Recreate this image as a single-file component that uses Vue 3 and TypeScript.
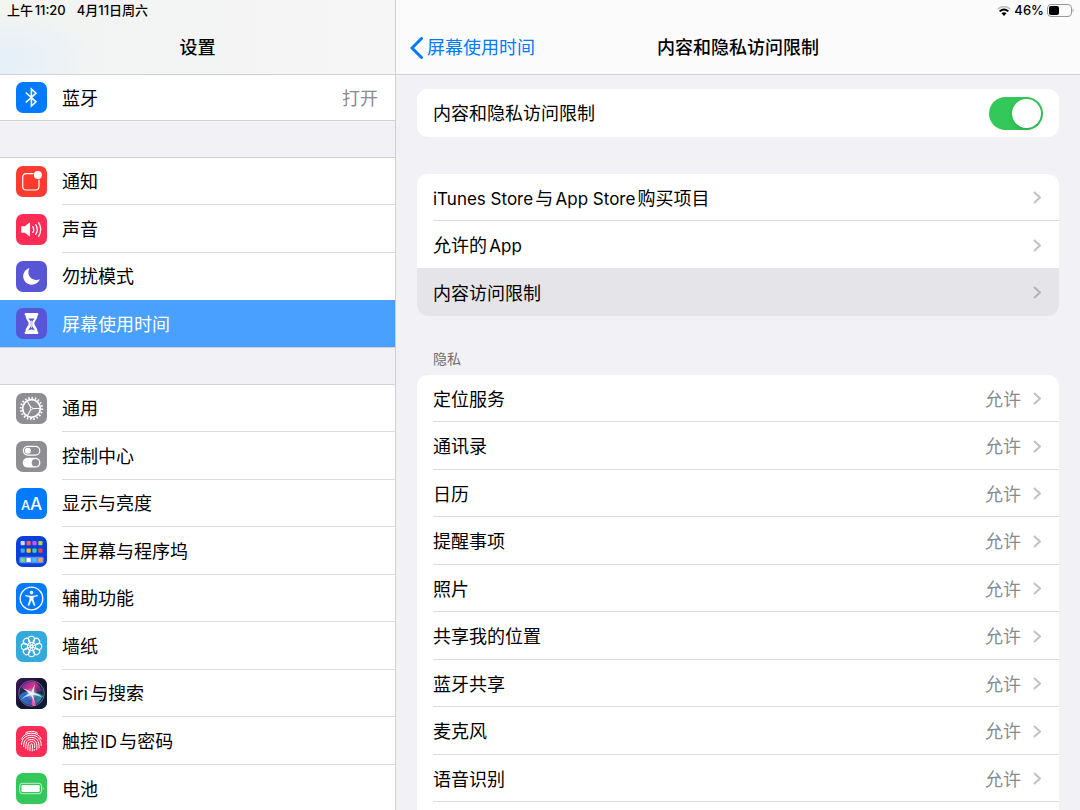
<script setup lang="ts">
import { ref } from 'vue'

interface SettingsItem {
  icon: string
  color: string
  label: string
  value?: string
  selected?: boolean
}

interface PrivacyItem {
  label: string
  value: string
}

const groups: SettingsItem[][] = [
  [{ icon: 'bluetooth', color: 'blue', label: '蓝牙', value: '打开' }],
  [
    { icon: 'bell', color: 'red', label: '通知' },
    { icon: 'sound', color: 'pink', label: '声音' },
    { icon: 'moon', color: 'purple', label: '勿扰模式' },
    { icon: 'hourglass', color: 'purple', label: '屏幕使用时间', selected: true },
  ],
  [
    { icon: 'gear', color: 'gray', label: '通用' },
    { icon: 'toggles', color: 'gray', label: '控制中心' },
    { icon: 'text', color: 'blue', label: '显示与亮度' },
    { icon: 'dock', color: 'navy', label: '主屏幕与程序坞' },
    { icon: 'person', color: 'blue', label: '辅助功能' },
    { icon: 'flower', color: 'sky', label: '墙纸' },
    { icon: 'siri', color: 'dark', label: 'Siri与搜索' },
    { icon: 'finger', color: 'pink', label: '触控ID与密码' },
    { icon: 'battery', color: 'green', label: '电池' },
  ],
]

const links = [
  { label: 'iTunes Store与App Store购买项目', pressed: false },
  { label: '允许的App', pressed: false },
  { label: '内容访问限制', pressed: true },
]

const privacy: PrivacyItem[] = [
  '定位服务', '通讯录', '日历', '提醒事项', '照片',
  '共享我的位置', '蓝牙共享', '麦克风', '语音识别',
].map((label) => ({ label, value: '允许' }))

const enabled = ref(true)
const petals = [0, 45, 90, 135, 180, 225, 270, 315]
const dots = [
  '#d8d8dc', '#ff5a5f', '#bf5af2', '#b5d334',
  '#32ade6', '#ffc21a', '#3ed598', '#ff453a',
  '#5ee27a', '#ffffff', '#32c8fa', '#ff9f45',
]

// Latin runs are set slightly smaller than the Chinese text around them.
function runs(label: string): { text: string; latin: boolean }[] {
  return label
    .split(/([A-Za-z ]+)/)
    .filter((text) => text.length > 0)
    .map((text) => ({ text, latin: /[A-Za-z]/.test(text) }))
}
</script>

<template>
  <div class="screen">
    <aside class="sidebar">
      <header class="bar bar-left">
        <div class="status">
          <span>上午11:20</span>
          <span class="date">4月11日周六</span>
        </div>
        <h1 class="title">设置</h1>
      </header>

      <nav class="menu" aria-label="设置">
        <ul v-for="(group, g) in groups" :key="g" class="group">
          <li v-for="item in group" :key="item.label" class="line">
            <a href="#" class="item" :class="{ selected: item.selected }">
              <svg class="icon" :class="item.color" viewBox="0 0 31 31" aria-hidden="true">
                <g v-if="item.icon === 'bluetooth'" fill="none" stroke="#fff" stroke-width="1.6">
                  <path d="M9.800 10.500 L20 19.800 L15.400 24 V7 L20 11.200 L9.800 20.500" />
                </g>
                <g v-else-if="item.icon === 'bell'">
                  <path d="M17.500 7.700 H10.500 Q6.700 7.700 6.700 11.500 V20.200 Q6.700 24 10.500 24 H19.200 Q23 24 23 20.200 V13.500" fill="none" stroke="#fff" stroke-width="1.2" />
                  <circle cx="21.900" cy="8.900" r="4" fill="#fff" />
                </g>
                <g v-else-if="item.icon === 'sound'">
                  <path d="M5.200 13 Q5.200 12.300 6 12.300 H9 L13.200 8.800 Q14 8.300 14 9.300 V21.700 Q14 22.700 13.200 22.200 L9 18.700 H6 Q5.200 18.700 5.200 18 Z" fill="#fff" />
                  <path d="M16.800 12.600 Q18.800 15.500 16.800 18.400 M19.700 10.600 Q22.900 15.500 19.700 20.400 M22.600 8.700 Q26.900 15.500 22.600 22.300" fill="none" stroke="#fff" stroke-width="1.300" stroke-linecap="round" />
                </g>
                <path v-else-if="item.icon === 'moon'" d="M13.600 7 C10 8 7.200 11.300 7.200 15.200 C7.200 20 11 23.700 15.700 23.700 C19.400 23.700 22.500 21.600 23.800 18.300 C22.800 18.800 21.600 19 20.400 19 C15.800 19 12.400 15.700 12.400 11.300 C12.400 9.700 12.800 8.200 13.600 7 Z" fill="#fff" />
                <g v-else-if="item.icon === 'hourglass'">
                  <path d="M9.800 5 H21.200 Q22.400 5 22.400 6.200 Q22.400 7.200 21.500 7.500 C21.200 11.800 18.400 13 18.400 15.500 C18.400 18 21.200 19.200 21.500 23.500 Q22.400 23.800 22.400 24.800 Q22.400 26 21.200 26 H9.800 Q8.600 26 8.600 24.800 Q8.600 23.800 9.500 23.500 C9.800 19.200 12.600 18 12.600 15.500 C12.600 13 9.800 11.800 9.500 7.500 Q8.600 7.200 8.600 6.200 Q8.600 5 9.800 5 Z" fill="#fff" />
                  <path d="M12.300 10.600 H18.700 L16.200 13.600 V18.300 L19 22.500 Q15.500 20.300 12 22.500 L14.800 18.300 V13.600 Z" fill="#5856d6" />
                  <path d="M15.500 12.500 V20" fill="none" stroke="#fff" stroke-width="0.700" />
                </g>
                <g v-else-if="item.icon === 'gear'" fill="none" stroke="#fff">
                  <circle cx="15.500" cy="15.500" r="10.600" stroke-width="2.200" pathLength="40" stroke-dasharray="0.900 1.100" />
                  <circle cx="15.500" cy="15.500" r="8.800" stroke-width="1.700" />
                  <path d="M16.500 15.500 H24 M15 14.700 L11.200 8 M15 16.300 L11.200 23" stroke-width="1.100" />
                  <circle cx="15.500" cy="15.500" r="1.200" stroke-width="0.800" />
                </g>
                <g v-else-if="item.icon === 'toggles'">
                  <rect x="7.400" y="5.400" width="16.400" height="8.800" rx="4.400" fill="none" stroke="#fff" stroke-width="1.200" />
                  <circle cx="11.900" cy="9.800" r="3" fill="#fff" />
                  <rect x="6.800" y="16.700" width="17.600" height="9.900" rx="4.900" fill="#fff" />
                  <circle cx="19.400" cy="21.650" r="3.700" fill="#8e8e93" />
                </g>
                <g v-else-if="item.icon === 'text'" class="letters">
                  <text x="5" y="22" font-size="13">A</text>
                  <text x="14" y="22" font-size="17">A</text>
                </g>
                <g v-else-if="item.icon === 'dock'">
                  <rect x="3.300" y="20.800" width="24.400" height="6.400" rx="1.500" fill="#fff" opacity="0.380" />
                  <rect
                    v-for="(dot, i) in dots" :key="dot"
                    :x="4.600 + (i % 4) * 5.900" :y="5 + Math.floor(i / 4) * 7.500 + (i > 7 ? 1.900 : 0)"
                    width="4.200" height="4.200" rx="0.900" :fill="dot"
                  />
                </g>
                <g v-else-if="item.icon === 'person'">
                  <circle cx="15.500" cy="15.500" r="11.300" fill="none" stroke="#fff" stroke-width="1.300" />
                  <circle cx="15.500" cy="9.600" r="1.800" fill="#fff" />
                  <path d="M9.500 12 Q12.500 12.900 15.500 12.900 Q18.500 12.900 21.500 12 L21.600 13.100 L17.400 14.200 L17.400 16.800 L19.200 22.300 L18 22.700 L15.800 17.600 H15.200 L13 22.700 L11.800 22.300 L13.600 16.800 V14.200 L9.400 13.100 Z" fill="#fff" stroke="#fff" stroke-width="0.300" />
                </g>
                <g v-else-if="item.icon === 'flower'" fill="none" stroke="#fff" stroke-width="1.100">
                  <circle v-for="a in petals" :key="a" cx="15.500" cy="8.400" r="3.100" :transform="`rotate(${a} 15.5 15.5)`" />
                  <circle v-for="a in petals" :key="a + 400" cx="15.500" cy="12.800" r="1.300" stroke-width="0.700" :transform="`rotate(${a} 15.5 15.5)`" />
                  <circle cx="15.500" cy="15.500" r="1.300" />
                </g>
                <g v-else-if="item.icon === 'siri'">
                  <defs>
                    <linearGradient id="siri-back" x1="0" y1="0" x2="1" y2="1">
                      <stop offset="0" stop-color="#43145c" />
                      <stop offset="0.500" stop-color="#15142e" />
                      <stop offset="1" stop-color="#0b2038" />
                    </linearGradient>
                    <radialGradient id="siri-glow">
                      <stop offset="0" stop-color="#fff" stop-opacity="0.900" />
                      <stop offset="0.350" stop-color="#bff" stop-opacity="0.500" />
                      <stop offset="1" stop-color="#6cf" stop-opacity="0" />
                    </radialGradient>
                    <linearGradient id="siri-top" x1="0" y1="0" x2="1" y2="0.500">
                      <stop offset="0" stop-color="#5a2aa8" />
                      <stop offset="0.550" stop-color="#d82c8c" />
                      <stop offset="1" stop-color="#58306c" />
                    </linearGradient>
                    <linearGradient id="siri-low" x1="0" y1="0" x2="1" y2="0">
                      <stop offset="0" stop-color="#1778d2" />
                      <stop offset="0.550" stop-color="#4a50a8" />
                      <stop offset="1" stop-color="#18a58d" />
                    </linearGradient>
                  </defs>
                  <rect width="31" height="31" fill="url(#siri-back)" />
                  <circle cx="15.500" cy="15.500" r="12.800" fill="#202a50" stroke="#8d83ad" stroke-width="0.700" />
                  <path d="M5 9 C9 4 15 3 19 4 C23 6 25 10 26 13 L15 16 Z" fill="url(#siri-top)" />
                  <path d="M3.500 18 C7 13 11 13 16 15 C21 14 24 15 27 18 C24 24 21 26 18 27 C11 28 5 24 3.500 18 Z" fill="url(#siri-low)" />
                  <path d="M16 15 L20 27 Q17.500 29 15.800 27 Z" fill="#e65ba7" />
                  <circle cx="15.500" cy="15.500" r="6.500" fill="url(#siri-glow)" />
                  <path d="M7 10.500 Q12 11.500 15.500 14 Q17 9 19 6 Q18 12 18 14.500 Q23 15.500 26 19 Q20 17.200 17 17 Q17.800 20 18.500 25 Q16.500 20 15 17.300 Q9 18.500 5 21.500 Q9 17.500 13 15.500 Q10 12.500 7 10.500 Z" fill="#fff" opacity="0.750" />
                </g>
                <g v-else-if="item.icon === 'finger'" fill="none" stroke="#fff" stroke-width="1" stroke-linecap="round">
                  <path d="M9.500 7 Q15.500 3.400 21.500 7" />
                  <path d="M5.700 13 Q8 7.200 15.500 7.200 Q23 7.200 25.200 13" />
                  <path d="M5.600 18.500 C5.500 12.500 9.500 9.300 15.500 9.300 C21.500 9.300 25.300 13 25.200 19.500" />
                  <path d="M7.700 20.700 C7.300 14.500 10.500 11.400 15.500 11.400 C20.500 11.400 23.500 14.500 23 22" />
                  <path d="M9.800 22.500 C9.500 16.500 11 13.500 15.500 13.500 C20 13.500 21.300 17 20.800 23.700" />
                  <path d="M11.800 23.800 C12 18.500 12 15.600 15.500 15.600 C19 15.600 18.900 19 18.500 21.500 M18.200 23.500 V24.500" />
                  <path d="M13.900 24.700 C14.300 20 13.900 17.700 15.400 17.700 C17 17.700 16.500 21 16.200 25" />
                </g>
                <g v-else-if="item.icon === 'battery'">
                  <rect x="3.700" y="10.300" width="21.800" height="10.400" rx="2.600" fill="none" stroke="#fff" stroke-width="0.700" />
                  <rect x="5.500" y="12" width="18.200" height="7" rx="1.300" fill="#fff" />
                  <path d="M26.800 14 Q28.300 15.500 26.800 17 Z" fill="#fff" />
                </g>
              </svg>
              <span class="cell">
                <span class="label"><span v-for="(run, r) in runs(item.label)" :key="r" :class="{ latin: run.latin }">{{ run.text }}</span></span>
                <span v-if="item.value" class="value">{{ item.value }}</span>
              </span>
            </a>
          </li>
        </ul>
      </nav>
    </aside>

    <main class="detail">
      <header class="bar bar-right">
        <div class="status status-end">
          <svg class="wifi" viewBox="0 0 14 10" aria-label="Wi-Fi">
            <path d="M0.700 3.200 Q7 -2.200 13.300 3.200" fill="none" stroke="#c3c3c5" stroke-width="1.700" />
            <path d="M2.600 5.400 Q7 1.600 11.400 5.400" fill="none" stroke="#000" stroke-width="1.800" />
            <path d="M4.500 7.300 Q7 5.200 9.500 7.300 L7 10 Z" fill="#000" />
          </svg>
          <span>46%</span>
          <svg class="cellpack" viewBox="0 0 27 13" aria-label="电池电量">
            <rect x="0.500" y="0.500" width="24" height="12" rx="3.500" fill="none" stroke="#98989a" />
            <rect x="2" y="2" width="10" height="9" rx="2" fill="#000" />
            <path d="M25.600 4.500 Q27.600 6.500 25.600 8.500 Z" fill="#98989a" />
          </svg>
        </div>
        <div class="navrow">
          <a href="#" class="back">
            <svg viewBox="0 0 13 22" aria-hidden="true">
              <path d="M11.500 1.500 L2 11 L11.500 20.500" fill="none" stroke="#007aff" stroke-width="3" stroke-linecap="round" stroke-linejoin="round" />
            </svg>
            <span>屏幕使用时间</span>
          </a>
          <h2 class="title">内容和隐私访问限制</h2>
          <span></span>
        </div>
      </header>

      <div class="content">
        <section class="card">
          <label class="row">
            <span class="label">内容和隐私访问限制</span>
            <input v-model="enabled" class="switch" type="checkbox" role="switch" />
          </label>
        </section>

        <section class="card">
          <a v-for="link in links" :key="link.label" href="#" class="row" :class="{ pressed: link.pressed }">
            <span class="label"><span v-for="(run, r) in runs(link.label)" :key="r" :class="{ latin: run.latin }">{{ run.text }}</span></span>
            <svg class="chevron" viewBox="0 0 8 13" aria-hidden="true">
              <path d="M1 1 L7 6.500 L1 12" />
            </svg>
          </a>
        </section>

        <h3 class="caption">隐私</h3>
        <section class="card card-open">
          <a v-for="item in privacy" :key="item.label" href="#" class="row">
            <span class="label">{{ item.label }}</span>
            <span class="value">{{ item.value }}</span>
            <svg class="chevron" viewBox="0 0 8 13" aria-hidden="true">
              <path d="M1 1 L7 6.500 L1 12" />
            </svg>
          </a>
        </section>
      </div>
    </main>
  </div>
</template>

<style>
body {
  margin: 0;
}
</style>

<style scoped>
.screen {
  display: grid;
  grid-template-columns: 396px 1fr;
  height: 100vh;
  overflow: hidden;
  background: #f2f1f6;
  color: #000;
  font-family: Inter, "Noto Sans CJK SC", sans-serif;
  font-size: 18px;
  line-height: 24px;
  text-autospace: normal;
}

.screen * {
  box-sizing: border-box;
}

a {
  color: inherit;
  text-decoration: none;
}

.sidebar,
.detail {
  display: flex;
  flex-direction: column;
  min-width: 0;
  min-height: 0;
}

.sidebar {
  border-right: 1px solid #d0d0d4;
}

.bar {
  flex: none;
  height: 75px;
  border-bottom: 1px solid #d2d2d5;
}

.bar-left {
  background:
    radial-gradient(90px 50px at 0 60px, #e4f0fa, #e4f0fa00),
    radial-gradient(140px 40px at 0 0, #f3f6ef, #f3f6ef00),
    linear-gradient(to right, #f1f2f2, #f6f6f6);
}

.bar-right {
  background: #fbfbfb;
}

.status {
  display: flex;
  align-items: center;
  gap: 11px;
  height: 21px;
  padding: 0 6px 0 7px;
  font-size: 13px;
  font-weight: 500;
  line-height: 20px;
}

.status span {
  padding-bottom: 2px;
}

.date {
  text-autospace: no-autospace;
}

.status-end {
  justify-content: flex-end;
  gap: 3px;
}

.wifi {
  width: 14px;
  height: 10px;
}

.cellpack {
  width: 27px;
  height: 13px;
}

.title {
  margin: 0;
  font-size: 18px;
  font-weight: 500;
  line-height: 53px;
  text-align: center;
  white-space: nowrap;
}

.navrow {
  display: grid;
  grid-template-columns: 1fr auto 1fr;
  align-items: center;
  height: 53px;
  padding: 0 14px;
}

.back {
  display: flex;
  align-items: center;
  gap: 4px;
  color: #007aff;
}

.back svg {
  width: 13px;
  height: 22px;
}

.menu,
.content {
  flex: 1;
  min-height: 0;
  overflow: hidden;
}

.group {
  margin: 0 0 36px;
  padding: 0;
  list-style: none;
  background: #fff;
  border-bottom: 1px solid #d2d2d6;
}

.group + .group {
  border-top: 1px solid #d2d2d6;
}

.line {
  height: 47px;
}

.line:nth-child(even) {
  height: 48px;
}

.group:nth-child(2) .line:last-child {
  height: 47px;
}

.group:first-child .line {
  height: 45px;
}

.item {
  display: flex;
  align-items: center;
  gap: 15px;
  height: 100%;
  padding-left: 16px;
}

.icon {
  flex: none;
  width: 31px;
  height: 31px;
  border-radius: 7px;
}

.blue { background: #007aff; }
.red { background: #ff3b30; }
.pink { background: #ff2d55; }
.purple { background: #5856d6; }
.gray { background: #8e8e93; }
.navy { background: #0a3fdc; }
.sky { background: #34aadc; }
.dark { background: #15142e; }
.green { background: #34c759; }

.letters {
  fill: #fff;
  font-family: Inter, sans-serif;
  font-weight: 500;
}

.cell {
  display: flex;
  flex: 1;
  align-items: center;
  justify-content: space-between;
  height: 100%;
  padding-right: 17px;
  border-bottom: 1px solid #dcdcde;
}

.line:last-child .cell {
  border-bottom: 0;
}

.line:has(+ .line .selected) .cell {
  border-color: #fff;
}

.selected {
  background: #4aa0ff;
  color: #fff;
}

.label,
.value {
  padding-top: 2px;
}

.latin {
  font-size: 17px;
}

.value {
  color: #8a8a8e;
}

.content {
  display: flex;
  flex-direction: column;
  padding: 14px 21px 0;
}

.card {
  flex: none;
  overflow: hidden;
  margin-bottom: 37px;
  border-radius: 11px;
  background: #fff;
}

.card-open {
  flex: 1 0 auto;
  margin-bottom: 0;
  border-radius: 11px 11px 0 0;
}

.row {
  display: flex;
  align-items: center;
  gap: 12px;
  position: relative;
  height: 47px;
  padding: 0 18px 0 16px;
}

.row:nth-child(even) {
  height: 48px;
}

label.row {
  height: 48px;
  padding-right: 16px;
}

.row .label {
  flex: 1;
}

.row:not(:last-child)::after,
.card-open .row::after {
  content: "";
  position: absolute;
  right: 0;
  bottom: 0;
  left: 16px;
  height: 1px;
  background: #dcdcde;
}

.row:has(+ .pressed)::after {
  left: 0;
  background: #e5e4e9;
}

.pressed {
  background: #e5e4e9;
}

.chevron {
  width: 8px;
  height: 13px;
  fill: none;
  stroke: #c2c2c5;
  stroke-width: 2;
}

.pressed .chevron {
  stroke: #b2b2b7;
}

.caption {
  margin: -4px 0 6px 16px;
  color: #6d6d72;
  font-size: 14px;
  font-weight: 400;
  line-height: 20px;
}

.switch {
  appearance: none;
  display: flex;
  width: 54px;
  height: 33px;
  margin: 0;
  padding: 2px;
  border-radius: 17px;
  background: #e5e5ea;
}

.switch::before {
  content: "";
  width: 29px;
  height: 29px;
  border-radius: 50%;
  background: #fff;
  box-shadow: 0 2px 4px #00000026;
}

.switch:checked {
  justify-content: flex-end;
  background: #34c759;
}
</style>
